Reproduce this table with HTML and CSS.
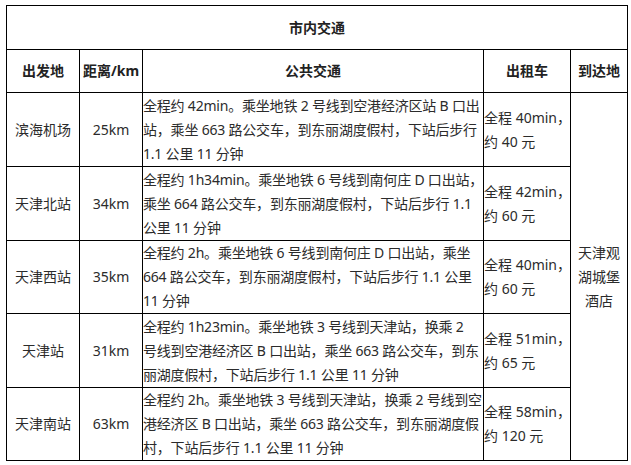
FILE: index.html
```html
<!DOCTYPE html>
<html lang="zh-CN">
<head>
<meta charset="utf-8">
<title>市内交通</title>
<link rel="stylesheet" href="styles.css">
</head>
<body>
<div class="wrap">
<table class="traffic">
  <colgroup>
    <col class="c1"><col class="c2"><col class="c3"><col class="c4"><col class="c5">
  </colgroup>
  <tr class="title-row"><th colspan="5">市内交通</th></tr>
  <tr class="head-row">
    <th>出发地</th><th>距离/km</th><th>公共交通</th><th>出租车</th><th>到达地</th>
  </tr>
  <tr class="r74">
    <td class="center">滨海机场</td>
    <td class="center">25km</td>
    <td class="bus">全程约 42min。乘坐地铁 2 号线到空港经济区站 B 口出<br>站，乘坐 663 路公交车，到东丽湖度假村，下站后步行<br>1.1 公里 11 分钟</td>
    <td class="taxi">全程 40min，<br>约 40 元</td>
    <td class="center dest" rowspan="5">天津观<br>湖城堡<br>酒店</td>
  </tr>
  <tr class="r74">
    <td class="center">天津北站</td>
    <td class="center">34km</td>
    <td class="bus">全程约 1h34min。乘坐地铁 6 号线到南何庄 D 口出站，<br>乘坐 664 路公交车，到东丽湖度假村，下站后步行 1.1<br>公里 11 分钟</td>
    <td class="taxi">全程 42min，<br>约 60 元</td>
  </tr>
  <tr class="r73">
    <td class="center">天津西站</td>
    <td class="center">35km</td>
    <td class="bus">全程约 2h。乘坐地铁 6 号线到南何庄 D 口出站，乘坐<br>664 路公交车，到东丽湖度假村，下站后步行 1.1 公里<br>11 分钟</td>
    <td class="taxi">全程 40min，<br>约 60 元</td>
  </tr>
  <tr class="r74">
    <td class="center">天津站</td>
    <td class="center">31km</td>
    <td class="bus">全程约 1h23min。乘坐地铁 3 号线到天津站，换乘 2<br>号线到空港经济区 B 口出站，乘坐 663 路公交车，到东<br>丽湖度假村，下站后步行 1.1 公里 11 分钟</td>
    <td class="taxi">全程 51min，<br>约 65 元</td>
  </tr>
  <tr class="r73">
    <td class="center">天津南站</td>
    <td class="center">63km</td>
    <td class="bus">全程约 2h。乘坐地铁 3 号线到天津站，换乘 2 号线到空<br>港经济区 B 口出站，乘坐 663 路公交车，到东丽湖度假<br>村，下站后步行 1.1 公里 11 分钟</td>
    <td class="taxi">全程 58min，<br>约 120 元</td>
  </tr>
</table>
</div>
</body>
</html>
```
FILE: styles.css
```css
html, body {
  margin: 0;
  padding: 0;
  background: #ffffff;
}

.wrap {
  padding: 5px 0 0 6px;
}

.traffic {
  border-collapse: collapse;
  table-layout: fixed;
  width: 621px;
  font-family: "Noto Sans", "Noto Sans CJK SC", sans-serif;
  font-size: 14px;
  line-height: 24px;
  color: #2b2b2b;
}

.c1 { width: 73px; }
.c2 { width: 63px; }
.c3 { width: 341px; }
.c4 { width: 87px; }
.c5 { width: 57px; }

.traffic th,
.traffic td {
  border: 1px solid #000000;
  padding: 0;
  vertical-align: middle;
}

.traffic th {
  font-weight: bold;
  text-align: center;
  color: #222222;
}

.title-row { height: 44px; }
.head-row { height: 43px; }
.r74 { height: 74px; }
.r73 { height: 73px; }

.center {
  text-align: center;
}

.bus {
  text-align: left;
  vertical-align: top;
  white-space: nowrap;
  letter-spacing: -0.2px;
  padding-left: 1px;
}

.taxi {
  text-align: left;
  white-space: nowrap;
  padding-left: 1px;
}

.dest {
  line-height: 24px;
}
```
